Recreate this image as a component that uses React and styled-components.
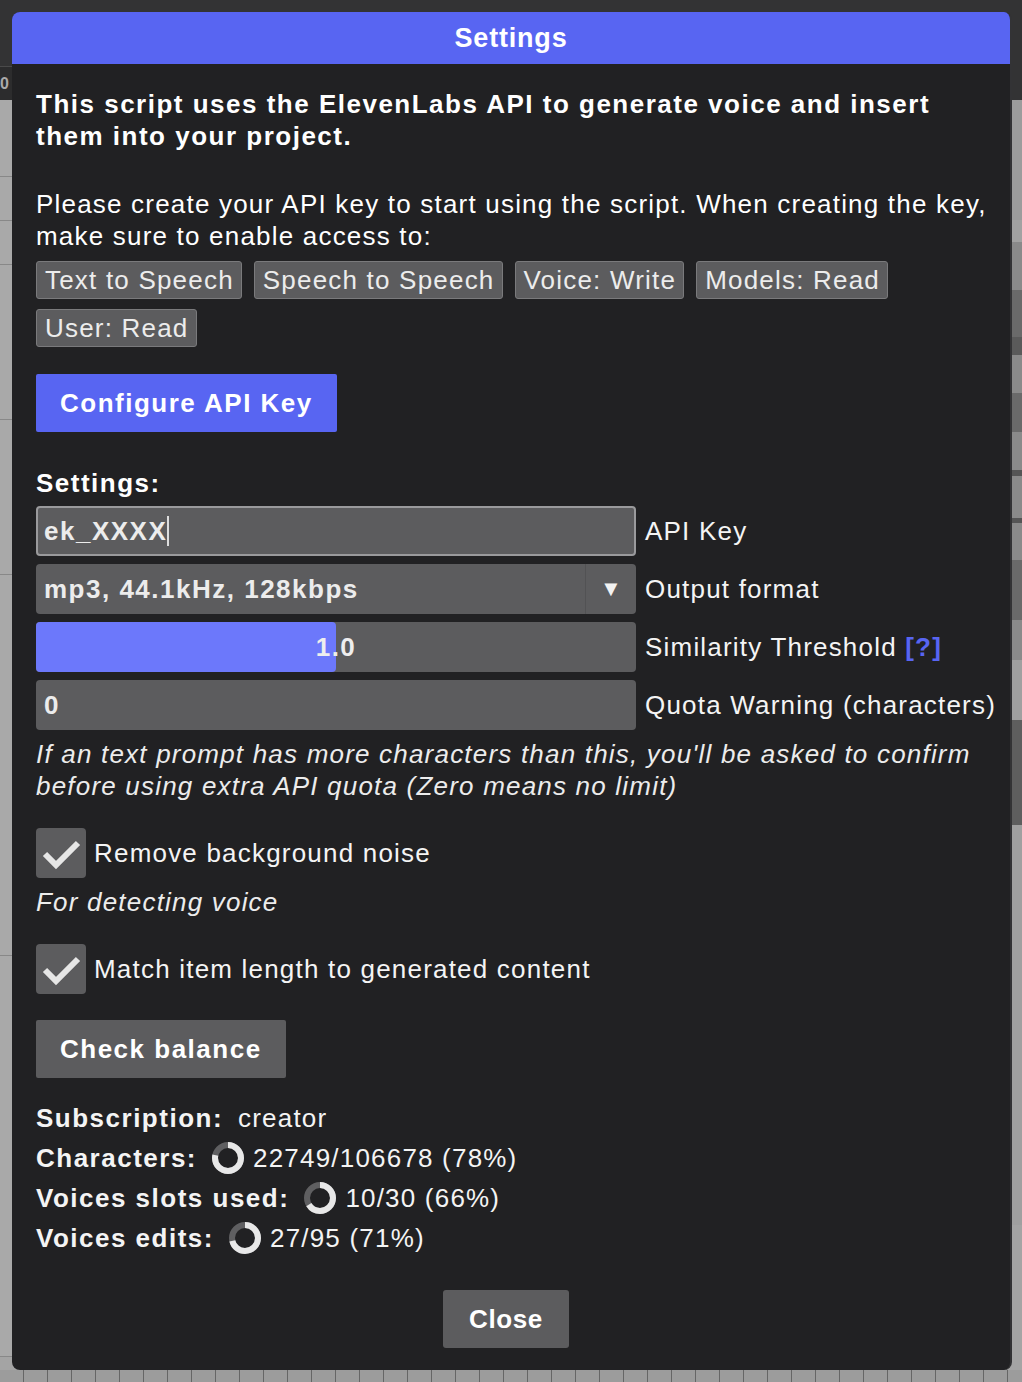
import React from "react";
import styled, { createGlobalStyle } from "styled-components";

const GlobalStyle = createGlobalStyle`
  html, body {
    margin: 0;
    padding: 0;
    background: #a4a4a4;
  }
  body {
    width: 1022px;
    height: 1382px;
    overflow: hidden;
    font-family: "Liberation Sans", Arial, sans-serif;
  }
`;

const tags = ["Text to Speech", "Speech to Speech", "Voice: Write", "Models: Read", "User: Read"];

const rightBlocks = [
  ["#9c9c9c", 120], ["#a2a2a2", 22], ["#8a8a8a", 48], ["#6a6a6a", 47], ["#5a5a5a", 18],
  ["#8a8a8a", 38], ["#6a6a6a", 39], ["#8a8a8a", 38], ["#555", 6], ["#8a8a8a", 42],
  ["#555", 5], ["#8a8a8a", 37], ["#6a6a6a", 60], ["#8a8a8a", 40], ["#a0a0a0", 60],
  ["#5e5e5e", 105], ["#a0a0a0", 400],
];

const stats = [
  { label: "Subscription:", value: "creator" },
  { label: "Characters:", value: "22749/106678 (78%)", pct: 78 },
  { label: "Voices slots used:", value: "10/30 (66%)", pct: 66 },
  { label: "Voices edits:", value: "27/95 (71%)", pct: 71 },
];

function Donut({ pct }) {
  const r = 13;
  const c = 2 * Math.PI * r;
  return (
    <DonutSvg viewBox="0 0 32 32">
      <circle cx="16" cy="16" r={r} fill="none" stroke="#5f5f61" strokeWidth="6" />
      <circle
        cx="16"
        cy="16"
        r={r}
        fill="none"
        stroke="#e8e8e8"
        strokeWidth="6"
        strokeDasharray={`${(c * pct) / 100} ${c}`}
        transform="rotate(-90 16 16)"
      />
    </DonutSvg>
  );
}

function Check() {
  return (
    <svg width="50" height="50" viewBox="0 0 50 50">
      <polyline
        points="9,26 20,37 42,15"
        fill="none"
        stroke="#e6e6e6"
        strokeWidth="6"
      />
    </svg>
  );
}

export default function App() {
  return (
    <>
      <GlobalStyle />
      <Backdrop>
        <TopBar>
          <RulerCell>0</RulerCell>
        </TopBar>
        <Tracks>
          <LeftTracks>
            <Track $h={76} />
            <Track $h={43} />
            <Track $h={43} />
            <Track $h={154} />
            <Track $h={154} />
            <Track $h={380} />
            <Track $h={400} />
          </LeftTracks>
          <Spacer />
          <RightTracks>
            {rightBlocks.map(([bg, h], i) => (
              <Block key={i} $bg={bg} $h={h} />
            ))}
          </RightTracks>
        </Tracks>
        <Ticks />
      </Backdrop>

      <Dialog>
        <TitleBar>Settings</TitleBar>
        <Body>
          <Heading>
            This script uses the ElevenLabs API to generate voice and insert
            them into your project.
          </Heading>
          <Para>
            Please create your API key to start using the script. When creating
            the key, make sure to enable access to:
          </Para>
          <TagList>
            {tags.map((t) => (
              <Tag key={t}>{t}</Tag>
            ))}
          </TagList>
          <Button $primary $mt={27}>Configure API Key</Button>

          <SectionTitle>Settings:</SectionTitle>
          <Fields>
            <FieldRow>
              <TextBox $focused>
                ek_XXXX<Caret />
              </TextBox>
              <FieldLabel>API Key</FieldLabel>
            </FieldRow>
            <FieldRow>
              <TextBox>
                <SelectValue>mp3, 44.1kHz, 128kbps</SelectValue>
                <SelectArrow>▼</SelectArrow>
              </TextBox>
              <FieldLabel>Output format</FieldLabel>
            </FieldRow>
            <FieldRow>
              <SliderBox>
                <SliderFill style={{ width: "50%" }} />
                <SliderValue>1.0</SliderValue>
              </SliderBox>
              <FieldLabel>
                Similarity Threshold <Help>[?]</Help>
              </FieldLabel>
            </FieldRow>
            <FieldRow>
              <TextBox>0</TextBox>
              <FieldLabel>Quota Warning (characters)</FieldLabel>
            </FieldRow>
          </Fields>
          <Note $mt={8}>
            If an text prompt has more characters than this, you'll be asked to
            confirm before using extra API quota (Zero means no limit)
          </Note>

          <CheckRow>
            <CheckBox>
              <Check />
            </CheckBox>
            Remove background noise
          </CheckRow>
          <Note $mt={8}>For detecting voice</Note>
          <CheckRow>
            <CheckBox>
              <Check />
            </CheckBox>
            Match item length to generated content
          </CheckRow>

          <Button $mt={26}>Check balance</Button>

          <Stats>
            {stats.map((s) => (
              <StatRow key={s.label}>
                <StatLabel>{s.label}</StatLabel>
                {s.pct !== undefined && <Donut pct={s.pct} />}
                <span>{s.value}</span>
              </StatRow>
            ))}
          </Stats>

          <Footer>
            <CloseButton>Close</CloseButton>
          </Footer>
        </Body>
      </Dialog>
    </>
  );
}

/* background app behind the modal */
const Backdrop = styled.div`
  width: 1022px;
  height: 1382px;
  display: flex;
  flex-direction: column;
  background: #a4a4a4;
`;

const TopBar = styled.div`
  height: 100px;
  background: #333334;
  display: flex;
  align-items: flex-end;
`;

const RulerCell = styled.div`
  width: 12px;
  height: 33px;
  border-top: 1px solid #4a4a4a;
  background: #2c2c2d;
  color: #aaa;
  font-weight: bold;
  font-size: 16px;
  line-height: 33px;
  overflow: hidden;
`;

const Tracks = styled.div`
  flex: 1;
  display: flex;
  overflow: hidden;
`;

const LeftTracks = styled.div`
  width: 12px;
  display: flex;
  flex-direction: column;
`;

const Track = styled.div`
  height: ${(p) => p.$h}px;
  flex-shrink: 0;
  border-bottom: 1px solid #888;
  background: #a9a9a9;
`;

const Spacer = styled.div`
  flex: 1;
`;

const RightTracks = styled.div`
  width: 10px;
  display: flex;
  flex-direction: column;
`;

const Block = styled.div`
  height: ${(p) => p.$h}px;
  flex-shrink: 0;
  background: ${(p) => p.$bg};
`;

const Ticks = styled.div`
  height: 12px;
  background: repeating-linear-gradient(
    to right,
    #9c9c9c 0,
    #9c9c9c 23px,
    #666 23px,
    #666 24px
  );
`;

/* modal */
const Dialog = styled.div`
  position: absolute;
  top: 12px;
  left: 12px;
  width: 1000px;
  height: 1358px;
  box-sizing: border-box;
  background: #212123;
  border-right: 2px solid #333335;
  border-radius: 8px;
  overflow: hidden;
  color: #fff;
  display: flex;
  flex-direction: column;
`;

const TitleBar = styled.div`
  height: 52px;
  flex-shrink: 0;
  background: #5865f2;
  color: #fff;
  font-weight: bold;
  font-size: 27px;
  letter-spacing: 0.8px;
  line-height: 52px;
  text-align: center;
`;

const Body = styled.div`
  padding: 24px 22px 0 24px;
  display: flex;
  flex-direction: column;
  font-size: 26px;
  line-height: 32px;
  letter-spacing: 1.2px;
`;

const Heading = styled.div`
  font-weight: bold;
  letter-spacing: 1.5px;
`;

const Para = styled.div`
  margin-top: 36px;
`;

const TagList = styled.div`
  margin-top: 9px;
  display: flex;
  flex-wrap: wrap;
  gap: 10px 12px;
  width: 900px;
`;

const Tag = styled.span`
  height: 38px;
  box-sizing: border-box;
  padding: 0 7px 0 8px;
  line-height: 36px;
  background: #5c5c5e;
  border: 1px solid #7a7a7c;
  border-radius: 3px;
  color: #ececec;
`;

const Button = styled.button`
  align-self: flex-start;
  margin-top: ${(p) => p.$mt || 0}px;
  height: 58px;
  padding: 0 24px;
  border: none;
  border-radius: 2px;
  background: ${(p) => (p.$primary ? "#5865f2" : "#5c5c5e")};
  color: #fff;
  font-family: inherit;
  font-weight: bold;
  font-size: 26px;
  letter-spacing: 1.5px;
`;

const SectionTitle = styled.div`
  margin-top: 35px;
  font-weight: bold;
  letter-spacing: 1.5px;
`;

const Fields = styled.div`
  margin-top: 7px;
  display: flex;
  flex-direction: column;
  gap: 8px;
`;

const FieldRow = styled.div`
  display: flex;
  align-items: center;
  gap: 9px;
`;

const TextBox = styled.div`
  width: 600px;
  height: 50px;
  flex-shrink: 0;
  box-sizing: border-box;
  display: flex;
  align-items: center;
  background: #5c5c5e;
  border: ${(p) => (p.$focused ? "2px solid #9a9a9c" : "none")};
  padding-left: ${(p) => (p.$focused ? 6 : 8)}px;
  border-radius: 4px;
  font-weight: bold;
  color: #ececec;
  letter-spacing: 1.5px;
`;

const Caret = styled.span`
  width: 2px;
  height: 30px;
  background: #ddd;
`;

const SelectValue = styled.span`
  flex: 1;
`;

const SelectArrow = styled.span`
  width: 50px;
  height: 50px;
  border-left: 1px solid #525254;
  display: flex;
  align-items: center;
  justify-content: center;
  font-size: 22px;
  letter-spacing: 0;
  color: #f2f2f2;
`;

const SliderBox = styled.div`
  position: relative;
  width: 600px;
  height: 50px;
  flex-shrink: 0;
  background: #5c5c5e;
  border-radius: 4px;
  display: flex;
  align-items: center;
  justify-content: center;
`;

const SliderFill = styled.div`
  position: absolute;
  left: 0;
  top: 0;
  bottom: 0;
  background: #6c78fb;
  border-radius: 4px;
`;

const SliderValue = styled.span`
  position: relative;
  font-weight: bold;
  color: #eee;
  letter-spacing: 1.5px;
`;

const FieldLabel = styled.span`
  color: #f4f4f4;
  white-space: nowrap;
`;

const Help = styled.span`
  color: #5865f2;
  font-weight: bold;
`;

const Note = styled.div`
  margin-top: ${(p) => p.$mt || 0}px;
  font-style: italic;
  color: #ececec;
`;

const CheckRow = styled.label`
  margin-top: 26px;
  display: flex;
  align-items: center;
  gap: 8px;
  color: #f4f4f4;
`;

const CheckBox = styled.span`
  width: 50px;
  height: 50px;
  border-radius: 4px;
  background: #5c5c5e;
  display: flex;
`;

const Stats = styled.div`
  margin-top: 20px;
  display: flex;
  flex-direction: column;
`;

const StatRow = styled.div`
  height: 40px;
  display: flex;
  align-items: center;
  gap: 9px;
  color: #f4f4f4;
`;

const StatLabel = styled.span`
  font-weight: bold;
  letter-spacing: 1.5px;
  margin-right: 6px;
`;

const DonutSvg = styled.svg`
  width: 32px;
  height: 32px;
`;

const Footer = styled.div`
  margin-top: 32px;
  padding-right: 12px;
  display: flex;
  justify-content: center;
`;

const CloseButton = styled(Button)`
  align-self: auto;
  width: 126px;
  padding: 0;
  border-radius: 3px;
  letter-spacing: 0.6px;
`;
